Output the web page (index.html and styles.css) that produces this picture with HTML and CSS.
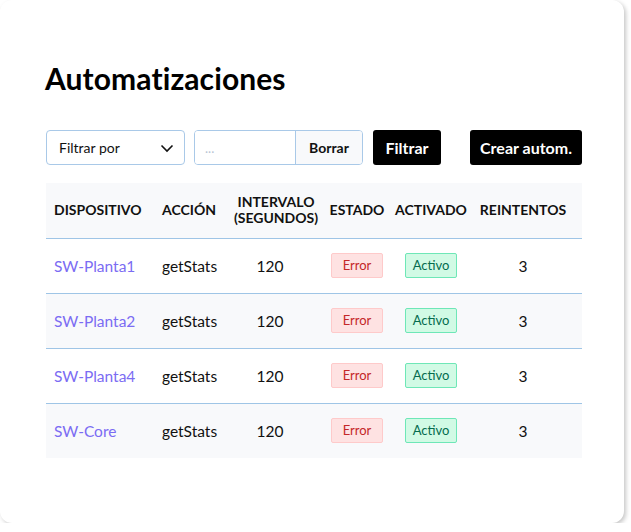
FILE: index.html
```html
<!DOCTYPE html>
<html lang="es">
<head>
    <meta charset="UTF-8">
    <meta name="viewport" content="width=device-width, initial-scale=1.0">
    <title>Automatizaciones</title>
    <link rel="stylesheet" href="styles.css">
</head>
<body>
    <div class="card">
        <h1>Automatizaciones</h1>

        <div class="toolbar">
            <div class="select">
                <span>Filtrar por</span>
                <svg width="14" height="14" viewBox="0 0 14 14"><path d="M1.5 4.5l5.5 5.5 5.5-5.5" fill="none" stroke="#111" stroke-width="1.6"/></svg>
            </div>
            <div class="input-group">
                <input type="text" placeholder="...">
                <button class="btn-light">Borrar</button>
            </div>
            <button class="btn-dark">Filtrar</button>
            <button class="btn-dark btn-create">Crear autom.</button>
        </div>

        <table>
            <colgroup>
                <col style="width: 108px">
                <col style="width: 72px">
                <col style="width: 100px">
                <col style="width: 62px">
                <col style="width: 86px">
                <col style="width: 108px">
            </colgroup>
            <thead>
                <tr>
                    <th>Dispositivo</th>
                    <th>Acción</th>
                    <th class="center">Intervalo<br>(segundos)</th>
                    <th class="center">Estado</th>
                    <th class="center">Activado</th>
                    <th class="center last">Reintentos</th>
                </tr>
            </thead>
            <tbody>
                <tr>
                    <td><a href="#">SW-Planta1</a></td>
                    <td>getStats</td>
                    <td class="center num">120</td>
                    <td class="center"><span class="badge error">Error</span></td>
                    <td class="center"><span class="badge ok">Activo</span></td>
                    <td class="center last">3</td>
                </tr>
                <tr>
                    <td><a href="#">SW-Planta2</a></td>
                    <td>getStats</td>
                    <td class="center num">120</td>
                    <td class="center"><span class="badge error">Error</span></td>
                    <td class="center"><span class="badge ok">Activo</span></td>
                    <td class="center last">3</td>
                </tr>
                <tr>
                    <td><a href="#">SW-Planta4</a></td>
                    <td>getStats</td>
                    <td class="center num">120</td>
                    <td class="center"><span class="badge error">Error</span></td>
                    <td class="center"><span class="badge ok">Activo</span></td>
                    <td class="center last">3</td>
                </tr>
                <tr>
                    <td><a href="#">SW-Core</a></td>
                    <td>getStats</td>
                    <td class="center num">120</td>
                    <td class="center"><span class="badge error">Error</span></td>
                    <td class="center"><span class="badge ok">Activo</span></td>
                    <td class="center last">3</td>
                </tr>
            </tbody>
        </table>
    </div>
</body>
</html>
```

FILE: styles.css
```css
body {
    margin: 0;
    background: #fff;
    font-family: Lato, "Liberation Sans", sans-serif;
    color: #111;
}

.card {
    width: 624px;
    height: 523px;
    box-sizing: border-box;
    padding: 57px 42px 0 46px;
    border-radius: 12px;
    background: #fff;
    box-shadow: 2px 2px 4px rgba(0, 0, 0, 0.22);
}

h1 {
    margin: 0 0 30px -1px;
    font-size: 30px;
    line-height: 43px;
    font-weight: 700;
    letter-spacing: 0.1px;
    color: #000;
}

.toolbar {
    display: flex;
    align-items: center;
    height: 35px;
}

.select {
    width: 139px;
    height: 35px;
    box-sizing: border-box;
    border: 1px solid #a9c9e8;
    border-radius: 4px;
    display: flex;
    align-items: center;
    justify-content: space-between;
    padding: 0 10px 0 12px;
    font-size: 14px;
}

.input-group {
    margin-left: 9px;
    display: flex;
    height: 35px;
    width: 169px;
    box-sizing: border-box;
    border: 1px solid #a9c9e8;
    border-radius: 4px;
    overflow: hidden;
}

.input-group input {
    width: 100px;
    flex: none;
    box-sizing: border-box;
    border: none;
    padding: 0 10px;
    font-family: inherit;
    font-size: 13px;
    outline: none;
}

.input-group input::placeholder {
    color: #b8c4d4;
}

.btn-light {
    flex: 1;
    padding: 0;
    border: none;
    border-left: 1px solid #a9c9e8;
    background: #f8f9fb;
    font-family: inherit;
    font-size: 14px;
    font-weight: 700;
    color: #111;
}

.btn-dark {
    margin-left: 10px;
    height: 35px;
    width: 68px;
    padding: 0;
    border: none;
    border-radius: 3px;
    background: #000;
    color: #fff;
    font-family: inherit;
    font-size: 16px;
    font-weight: 700;
}

.btn-create {
    margin-left: auto;
    width: 112px;
}

table {
    margin-top: 18px;
    width: 536px;
    table-layout: fixed;
    border-collapse: collapse;
}

th {
    height: 55px;
    box-sizing: border-box;
    padding: 0 8px;
    background: #f8f9fb;
    text-align: left;
    font-size: 14px;
    font-weight: 700;
    text-transform: uppercase;
    line-height: 16px;
    color: #111;
    border-bottom: 1px solid #9fc5e6;
    white-space: nowrap;
}

td {
    height: 54px;
    padding: 0 8px;
    font-size: 15.5px;
    border-bottom: 1px solid #9fc5e6;
    white-space: nowrap;
}

tbody tr:nth-child(even) td {
    background: #f8f9fb;
}

tbody tr:last-child td {
    border-bottom: none;
}

.center {
    text-align: center;
    padding: 0;
}

.num {
    padding-right: 12px;
}

.last {
    padding-right: 10px;
}

a {
    color: #7b6cf3;
    text-decoration: none;
}

.badge {
    display: inline-block;
    width: 52px;
    height: 25px;
    box-sizing: border-box;
    line-height: 23px;
    border-radius: 2px;
    font-size: 13px;
    text-align: center;
}

.error {
    background: #fee2e2;
    border: 1px solid #fecaca;
    color: #c42727;
}

.ok {
    background: #d1fae5;
    border: 1px solid #6ee7b7;
    color: #046c4e;
}
```
